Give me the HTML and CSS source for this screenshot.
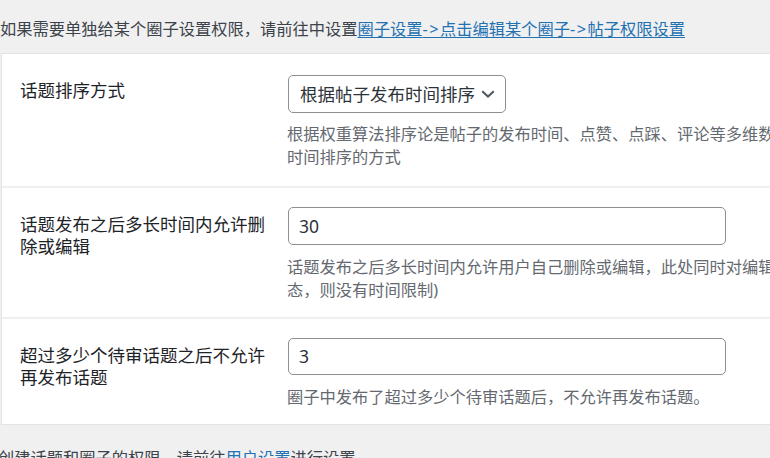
FILE: index.html
```html
<!DOCTYPE html>
<html lang="zh-CN">
<head>
<meta charset="utf-8">
<title>话题设置</title>
<link rel="stylesheet" href="styles.css">
</head>
<body>
<p class="note">如果需要单独给某个圈子设置权限，请前往中设置<a href="#" class="link">圈子设置<span class="arrow">-&gt;</span>点击编辑某个圈子<span class="arrow">-&gt;</span>帖子权限设置</a></p>
<div class="card">
  <div class="row row-select">
    <div class="label">话题排序方式</div>
    <div class="field">
      <div class="select-wrap">
        <select class="select">
          <option>根据帖子发布时间排序</option>
        </select>
        <svg class="chevron" width="14" height="8" viewBox="0 0 14 8" aria-hidden="true"><polyline points="1.2,1.2 7,6.6 12.8,1.2" fill="none" stroke="#50575e" stroke-width="2"/></svg>
      </div>
      <p class="desc">根据权重算法排序论是帖子的发布时间、点赞、点踩、评论等多维数据计算，或按时间排序的方式</p>
    </div>
  </div>
  <div class="row">
    <div class="label">话题发布之后多长时间内允许删除或编辑</div>
    <div class="field">
      <input class="input" type="text" value="30">
      <p class="desc">话题发布之后多长时间内允许用户自己删除或编辑，此处同时对编辑生效（若无状态，则没有时间限制)</p>
    </div>
  </div>
  <div class="row">
    <div class="label">超过多少个待审话题之后不允许再发布话题</div>
    <div class="field">
      <input class="input" type="text" value="3">
      <p class="desc">圈子中发布了超过多少个待审话题后，不允许再发布话题。</p>
    </div>
  </div>
</div>
<p class="note note-bottom">创建话题和圈子的权限，请前往<a href="#" class="link">用户设置</a>进行设置</p>
</body>
</html>
```
FILE: styles.css
```css
html, body {
  margin: 0;
  padding: 0;
}
body {
  background: #f0f0f1;
  overflow: hidden;
  width: 770px;
  height: 458px;
  font-family: "Noto Sans", "Noto Sans CJK SC", sans-serif;
  color: #3c434a;
}
.note {
  margin: 17px 0 0 0;
  font-size: 16.25px;
  line-height: 24px;
  white-space: nowrap;
}
.note-bottom {
  margin-top: 21px;
  margin-left: -2px;
}
.link {
  color: #2271b1;
  text-decoration: underline;
  text-underline-offset: 2px;
}
.arrow {
  letter-spacing: 1.5px;
}
.card {
  margin: 12px 0 0 1px;
  width: 960px;
  background: #fff;
  border: 1px solid #e2e3e5;
}
.row {
  display: flex;
  padding: 19px 0 14px 18px;
  border-bottom: 2px solid #f0f0f1;
}
.row-select {
  padding-bottom: 17px;
}
.row:last-child {
  border-bottom: 0;
}
.label {
  flex: 0 0 250px;
  margin-right: 18px;
  padding-top: 6px;
  font-size: 17.5px;
  line-height: 22px;
  color: #1d2327;
}
.field {
  flex: 0 0 600px;
}
.select-wrap {
  position: relative;
  width: 218px;
  margin-top: 2px;
}
.select {
  display: block;
  -webkit-appearance: none;
  appearance: none;
  width: 218px;
  height: 37.5px;
  box-sizing: border-box;
  border: 1px solid #8c8f94;
  border-radius: 5px;
  background: #fff;
  padding: 0 30px 0 11px;
  font-family: "Noto Sans", "Noto Sans CJK SC", sans-serif;
  font-size: 17.5px;
  color: #2c3338;
}
.chevron {
  position: absolute;
  right: 11px;
  top: 15px;
}
.input {
  display: block;
  width: 438px;
  height: 37.5px;
  box-sizing: border-box;
  border: 1px solid #8c8f94;
  border-radius: 5px;
  padding: 0 10px;
  font-family: "Noto Sans", "Noto Sans CJK SC", sans-serif;
  font-size: 17.5px;
  color: #2c3338;
  background: #fff;
}
.desc {
  margin: 11px 0 0 -1px;
  width: 590px;
  font-size: 16.25px;
  line-height: 23.4px;
  color: #646970;
}
.select-wrap + .desc {
  margin-top: 10px;
}
```
